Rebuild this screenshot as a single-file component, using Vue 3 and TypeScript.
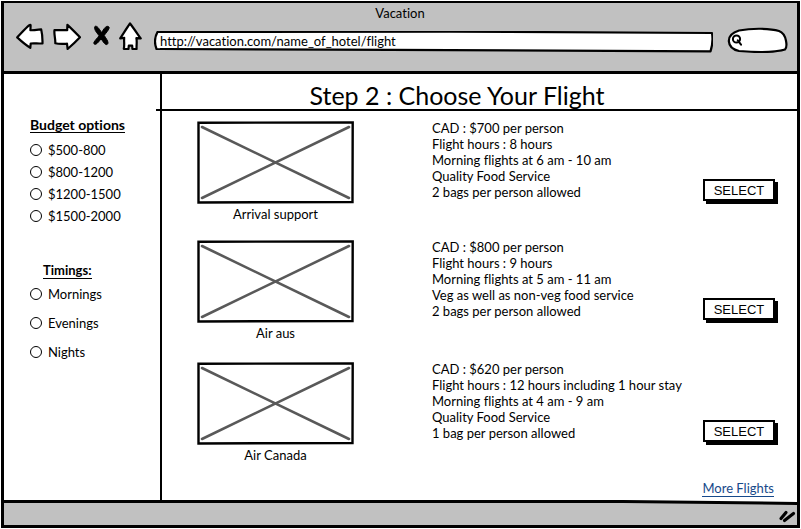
<script setup lang="ts">
import { ref } from 'vue'

interface Flight {
  airline: string
  details: string[]
}

const url = ref('http://vacation.com/name_of_hotel/flight')
const query = ref('')
const budget = ref('')
const timing = ref('')

const budgets: string[] = ['$500-800', '$800-1200', '$1200-1500', '$1500-2000']
const timings: string[] = ['Mornings', 'Evenings', 'Nights']

const flights: Flight[] = [
  {
    airline: 'Arrival support',
    details: [
      'CAD : $700 per person',
      'Flight hours : 8 hours',
      'Morning flights at 6 am - 10 am',
      'Quality Food Service',
      '2 bags per person allowed',
    ],
  },
  {
    airline: 'Air aus',
    details: [
      'CAD : $800 per person',
      'Flight hours : 9 hours',
      'Morning flights at 5 am - 11 am',
      'Veg as well as non-veg food service',
      '2 bags per person allowed',
    ],
  },
  {
    airline: 'Air Canada',
    details: [
      'CAD : $620 per person',
      'Flight hours : 12 hours including 1 hour stay',
      'Morning flights at 4 am - 9 am',
      'Quality Food Service',
      '1 bag per person allowed',
    ],
  },
]
</script>

<template>
  <div class="window">
    <header class="chrome">
      <div class="window-title">Vacation</div>
      <div class="toolbar">
        <nav class="nav">
          <button type="button" class="nav-btn" aria-label="Back">
            <svg width="28" height="28" viewBox="0 0 28 28">
              <path class="outline" d="M1.200 15.400C5 11.600 9.300 6.400 13.400 3.200C14.400 2.400 14.700 3 14.600 4L14.400 8.200C18 8.400 22 7.700 25.200 7.400C26.200 11.500 26.600 17 26.500 21.400C22.500 21.700 18.500 21.200 14.700 21.500L14.300 25.800C10 23.200 5.400 19.300 1.200 15.400Z" />
            </svg>
          </button>
          <button type="button" class="nav-btn" aria-label="Forward">
            <svg width="28" height="28" viewBox="0 0 28 28">
              <path class="outline" d="M1.500 8C5.500 8.500 10 7.900 14.200 8.100L14.400 2.900C18.500 6.600 23 11.200 27 15.300C23.500 19 18.600 23.600 14.600 27L14 21.700C10 21.900 6 22.200 2.300 21.200C2.600 17 .8 12 1.500 8Z" />
            </svg>
          </button>
          <button type="button" class="nav-btn" aria-label="Stop">
            <svg width="20" height="28" viewBox="0 0 20 28">
              <path d="M5.200 4.300C7.200 3.700 8.900 6.400 11.600 10.600C13 8.200 14.900 5 16.700 4.400C18.200 4 19.600 5 19.100 6.200C18.500 8.300 15.800 11.200 14.200 13.400C15.500 15.700 18 18.600 18 20.700C18 22.400 16.600 23 15.500 22.300C13.900 21.200 12.600 18.800 11.100 16.900C9.200 19 7.500 21.500 5.700 22.300C4.300 22.600 3.300 21.500 4 20.200C5 18.200 7.600 16 9 13.700C7.700 11.600 5.100 9.200 4.700 6.700C4.500 5.600 4.400 4.700 5.200 4.300Z" stroke="#000" />
            </svg>
          </button>
          <button type="button" class="nav-btn" aria-label="Home">
            <svg width="24" height="28" viewBox="0 0 24 28">
              <path class="outline" d="M1.200 16.400C4.500 11.500 7.600 6.200 11 1.500C14.500 6 18.200 11.500 21.700 16.400L17.400 16.200C18.200 20 17.300 23.500 17.600 27L13.400 26.900L13.200 23.700L9.800 23.700L9.500 27L4.800 26.800C5.700 23 4.800 19.500 5.200 15.900Z" />
            </svg>
          </button>
        </nav>
        <div class="address">
          <svg class="shape" viewBox="0 0 560 22" preserveAspectRatio="none" aria-hidden="true">
            <path d="M3.500 1C150 .3 400 .2 559 2C560 8 559.200 15 557.500 20.300C400 21 190 18 2.500 18C.6 13 .7 6 3.500 1Z" />
          </svg>
          <input v-model="url" class="address-input" type="text" aria-label="Address" />
        </div>
        <div class="search">
          <svg class="shape" viewBox="0 0 61 26" preserveAspectRatio="none" aria-hidden="true">
            <path d="M12 3.500C25 1 43 1.200 52 4C60 7 60.500 20 58 22.500C48 25.500 28 25.300 12 24C-.5 21 -2.500 8 12 3.500Z" />
          </svg>
          <svg class="lens" width="12" height="12" viewBox="0 0 12 12" aria-hidden="true">
            <circle cx="5.500" cy="5" r="3.600" />
            <path d="M6.800 6.400L10 10.600" />
          </svg>
          <input v-model="query" class="search-input" type="text" aria-label="Search" />
        </div>
      </div>
    </header>

    <div class="body">
      <aside class="sidebar">
        <fieldset class="filter">
          <legend class="filter-title">Budget options</legend>
          <label v-for="item in budgets" :key="item" class="option">
            <input v-model="budget" type="radio" name="budget" :value="item" />
            <span>{{ item }}</span>
          </label>
        </fieldset>
        <fieldset class="filter filter-timings">
          <legend class="filter-title">Timings:</legend>
          <label v-for="item in timings" :key="item" class="option">
            <input v-model="timing" type="radio" name="timing" :value="item" />
            <span>{{ item }}</span>
          </label>
        </fieldset>
      </aside>

      <main class="content">
        <h1 class="step">Step 2 : Choose Your Flight</h1>
        <div class="flights">
          <article v-for="flight in flights" :key="flight.airline" class="flight">
            <figure class="picture">
              <svg width="157" height="83" viewBox="0 0 157 83" aria-hidden="true">
                <path class="cross" d="M5 6L152 77M152 6L5 77" />
                <path class="frame" d="M1.500 1.700L155.700 1.500L155.500 81L1.500 81.500Z" />
              </svg>
              <figcaption>{{ flight.airline }}</figcaption>
            </figure>
            <ul class="details">
              <li v-for="line in flight.details" :key="line">{{ line }}</li>
            </ul>
            <button type="button" class="select">SELECT</button>
          </article>
        </div>
        <a href="#" class="more">More Flights</a>
      </main>
    </div>

    <footer class="status">
      <svg class="slope" viewBox="0 0 794 25" preserveAspectRatio="none" aria-hidden="true">
        <path class="slope-fill" d="M0 1.500L620 1.500L794 3.500V25H0Z" />
        <path class="slope-line" d="M0 1.500L620 1.500L794 3.500" />
      </svg>
      <svg class="grip" width="18" height="14" viewBox="0 0 18 14" aria-hidden="true">
        <path d="M3 9.500L8 3.500M6.500 11.500L15.500 4.500" />
      </svg>
    </footer>
  </div>
</template>

<style>
body {
  background: #fff;
}
</style>

<style scoped>
* {
  box-sizing: border-box;
}

.window {
  display: flex;
  flex-direction: column;
  min-height: calc(100vh - 2px);
  margin: 1px;
  border: 3px solid #000;
  border-top-width: 2px;
  background: #fff;
  color: #000;
  font-family: Lato, "Liberation Sans", sans-serif;
  font-size: 13px;
  font-variant-ligatures: none;
  line-height: 16px;
}

.chrome {
  padding: 2px 9px 18px 12px;
  border-bottom: 3px solid #000;
  background: #c1c1c1;
}

.window-title {
  padding-right: 4px;
  text-align: center;
}

.toolbar {
  display: flex;
  align-items: flex-end;
  height: 32px;
}

.nav {
  display: flex;
  align-self: flex-start;
  gap: 9px;
  margin-top: 1px;
  margin-right: 11px;
}

.nav-btn {
  display: block;
  padding: 0;
  border: 0;
  background: none;
}

.nav-btn svg {
  display: block;
}

.outline,
.shape path {
  fill: #fff;
  stroke: #000;
  stroke-width: 2.2;
  stroke-linejoin: round;
  vector-effect: non-scaling-stroke;
}

.address {
  position: relative;
  flex: 1;
  height: 22px;
}

.shape {
  position: absolute;
  inset: 0;
  display: block;
  width: 100%;
  height: 100%;
}

.address-input,
.search-input {
  position: relative;
  width: 100%;
  padding: 0 6px;
  border: 0;
  outline: 0;
  background: none;
  color: #000;
  font: inherit;
}

.address-input {
  height: 19px;
}

.search {
  position: relative;
  display: flex;
  align-items: center;
  width: 61px;
  height: 26px;
  margin-left: 14px;
  padding-left: 4px;
}

.lens {
  position: relative;
  flex: none;
  fill: none;
  stroke: #000;
  stroke-width: 2;
  stroke-linecap: round;
}

.search-input {
  flex: 1;
  min-width: 0;
}

.body {
  display: flex;
  flex: 1;
}

.sidebar {
  flex: none;
  width: 158px;
  padding: 43px 0 0 26px;
  border-right: 2px solid #000;
}

.filter {
  margin: 0;
  padding: 0;
  border: 0;
}

.filter-title {
  padding: 0;
  margin-bottom: 6px;
  border-bottom: 1px solid #000;
  font-size: 14px;
  font-weight: 700;
  line-height: 15px;
}

.filter-timings {
  margin-top: 36px;
}

.filter-timings .filter-title {
  margin: 0 0 0 13px;
  font-size: 13px;
}

.option {
  display: flex;
  align-items: center;
  gap: 6px;
  height: 22px;
}

.filter-timings .option {
  height: 29px;
}

.option input {
  appearance: none;
  width: 12px;
  height: 12px;
  margin: 0;
  border: 1px solid #000;
  border-radius: 50%;
}

.option input:checked {
  background: radial-gradient(circle, #000 3px, transparent 4px);
}

.content {
  display: flex;
  flex: 1;
  flex-direction: column;
  min-width: 0;
}

.step {
  margin: 0 -3px 0 -6px;
  padding: 7px 42px 0 0;
  border-bottom: 2px solid #000;
  font-size: 25px;
  font-weight: 400;
  line-height: 28px;
  text-align: center;
}

.flights {
  display: grid;
  grid-template-rows: 119px 122px auto;
  padding: 10px 22px 0 35px;
}

.flight {
  display: grid;
  grid-template-columns: 157px minmax(0, 1fr) 72px;
  align-items: start;
}

.picture {
  margin: 0;
  text-align: center;
}

.picture svg {
  display: block;
  margin-bottom: 2px;
}

.frame {
  fill: none;
  stroke: #000;
  stroke-width: 2.4;
}

.cross {
  fill: none;
  stroke: #595959;
  stroke-width: 2.6;
  stroke-linecap: round;
}

.details {
  margin: -1px 0 0;
  padding: 0 0 0 78px;
  list-style: none;
  white-space: nowrap;
}

.select {
  height: 22px;
  margin-top: 58px;
  padding: 0;
  border: 2px solid #000;
  background: #fff;
  box-shadow: 3px 3px 0 #000;
  color: #000;
  font-family: "Liberation Sans", sans-serif;
  font-size: 13px;
}

.more {
  align-self: flex-end;
  margin: 18px 23px 0 0;
  border-bottom: 1px solid #17498a;
  color: #17498a;
  line-height: 15px;
  text-decoration: none;
}

.status {
  position: relative;
  display: flex;
  align-items: center;
  justify-content: flex-end;
  height: 25px;
}

.slope {
  position: absolute;
  inset: 0;
  width: 100%;
  height: 100%;
}

.slope-fill {
  fill: #c1c1c1;
}

.slope-line {
  fill: none;
  stroke: #000;
  stroke-width: 3;
  vector-effect: non-scaling-stroke;
}

.grip {
  position: relative;
  margin: 6px 1px 0 0;
  fill: none;
  stroke: #000;
  stroke-width: 3.2;
  stroke-linecap: round;
}
</style>
